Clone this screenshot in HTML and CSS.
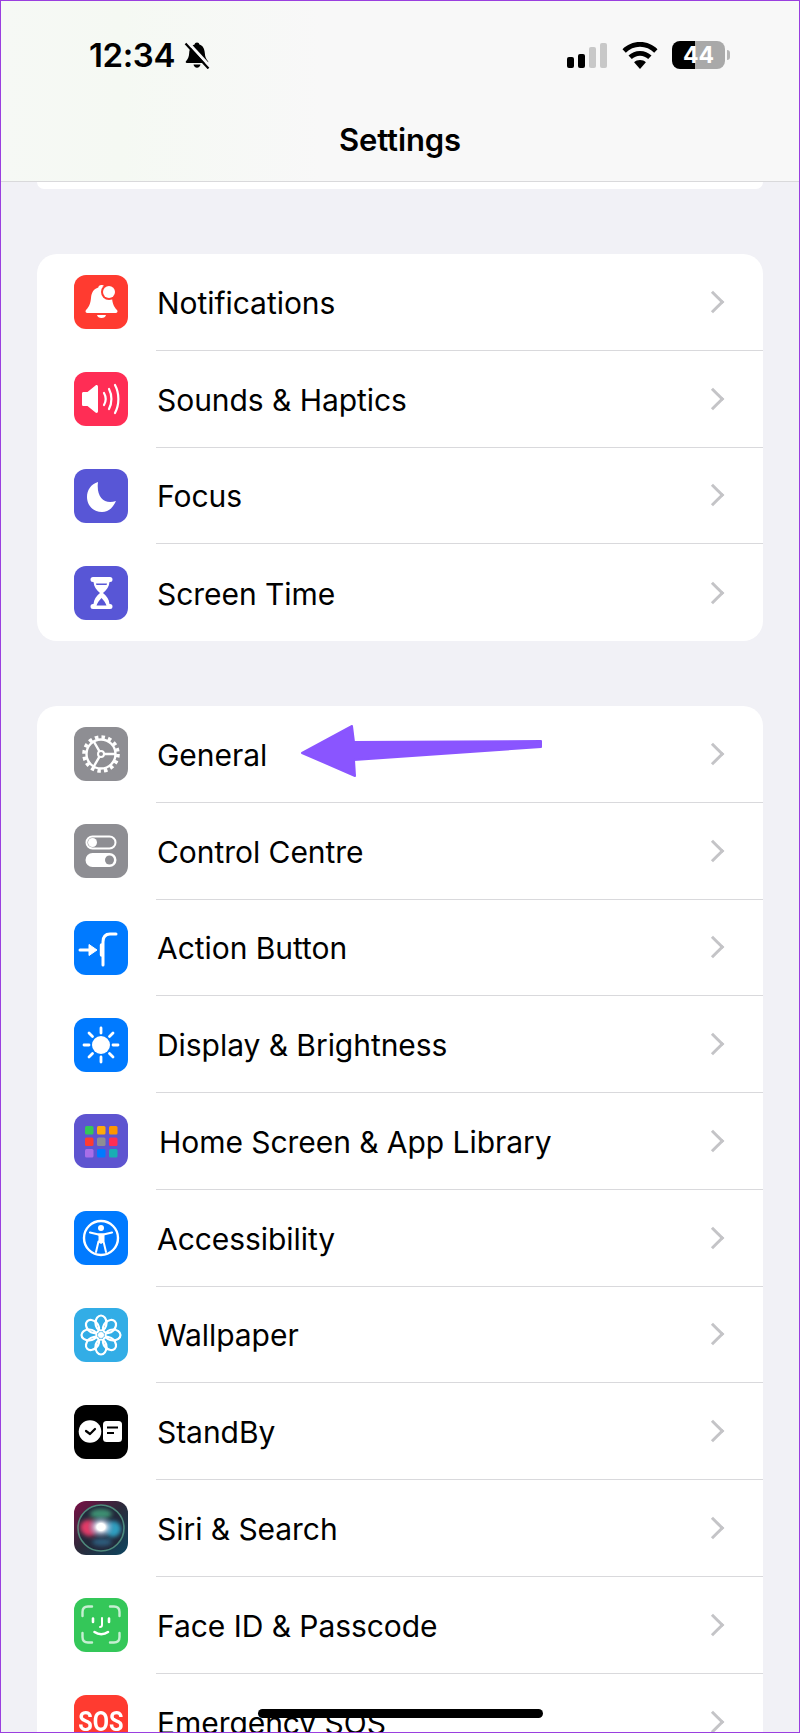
FILE: index.html
```html
<!DOCTYPE html>
<html>
<head>
    <meta charset="utf-8">
    <title>Settings</title>
    <link rel="stylesheet" href="styles.css">
</head>

<body>
    <div class="top">
        <div class="status">
            <div class="time">12:34</div>
            <svg class="bell" viewBox="0 0 28 28">
                <path d="M14 1.500c-1.400 0-2.200.9-2.400 2C8 4.600 6.500 8 6.200 12c-.3 4-1.200 6-3.200 8.300-.6.8-.2 1.700.9 1.700h20.200c1.100 0 1.500-.9.9-1.700-2-2.300-2.900-4.300-3.200-8.300-.3-4-1.800-7.400-5.400-8.500-.2-1.100-1-2-2.400-2z"/>
                <path d="M10.500 23.500h7c-.3 2-1.700 3.200-3.500 3.200s-3.200-1.200-3.500-3.200z"/>
                <path d="M4.500 1l23 25" stroke="#f8f8f8" stroke-width="3"/>
                <path d="M2.500 2.500l23 25" stroke="#000" stroke-width="2.200"/>
            </svg>
            <div class="status-r">
                <div class="signal"><i></i><i></i><i class="off"></i><i class="off"></i></div>
                <svg class="wifi" viewBox="0 0 36 27">
                    <path d="M18 0C11 0 5 2.700.5 7.200l3.300 3.500C7.500 7 12.500 4.800 18 4.800s10.500 2.200 14.200 5.900l3.300-3.500C31 2.700 25 0 18 0z"/>
                    <path d="M18 9c-4.500 0-8.500 1.800-11.500 4.600l3.300 3.500c2.100-2 5-3.300 8.200-3.300s6.100 1.300 8.200 3.300l3.300-3.500C26.500 10.800 22.500 9 18 9z"/>
                    <path d="M18 18c-2.300 0-4.400.9-5.900 2.300L18 27l5.900-6.700C22.400 18.900 20.300 18 18 18z"/>
                </svg>
                <div class="batt">44</div>
                <div class="batt-cap"></div>
            </div>
        </div>
        <div class="nav-title">Settings</div>
    </div>
    <div class="stub"></div>

    <div class="group">
        <div class="row">
            <svg class="ic" viewBox="0 0 54 54">
                <rect width="54" height="54" rx="12" fill="#ff3b30"/>
                <path d="M27.500 10c-2 0-3 1-3.200 2.600C19.500 14 17.500 18 17 23c-.5 5-1.500 8.500-5 12-1 1-.5 3 1.500 3h28c2 0 2.500-2 1.500-3-3.500-3.500-4.500-7-5-12-.5-5-2.500-9-7.300-10.400-.2-1.600-1.200-2.600-2.700-2.600z" fill="#fff"/>
                <path d="M23 40h9c-.5 2-2 3-4.500 3s-4-1-4.500-3z" fill="#fff"/>
                <circle cx="35" cy="17" r="8" fill="#ff3b30"/>
                <circle cx="35" cy="17" r="6" fill="#fff"/>
            </svg>
            <div class="label">Notifications<span class="chev"></span></div>
        </div>
        <div class="row">
            <svg class="ic" viewBox="0 0 54 54">
                <rect width="54" height="54" rx="12" fill="#ff2d55"/>
                <path d="M8 21.500c0-1 .7-1.500 1.500-1.500h4l8-6.500c1-.8 2.500-.3 2.500 1.200v24.600c0 1.500-1.500 2-2.500 1.200l-8-6.500h-4c-.8 0-1.500-.5-1.500-1.500z" fill="#fff"/>
                <g fill="none" stroke="#fff" stroke-width="2.200" stroke-linecap="round">
                    <path d="M30 21c2 3.500 2 8.500 0 12"/>
                    <path d="M35 17c3.200 6 3.200 14 0 20"/>
                    <path d="M41 13c4.500 8.500 4.500 19.500 0 28"/>
                </g>
            </svg>
            <div class="label">Sounds &amp; Haptics<span class="chev"></span></div>
        </div>
        <div class="row">
            <svg class="ic" viewBox="0 0 54 54">
                <rect width="54" height="54" rx="12" fill="#5856d6"/>
                <path d="M24 13C17 15 13 21 13 28c0 8.500 6.500 15 15 15 6 0 11-4 14-11-11 4-20-3-18-19z" fill="#fff"/>
            </svg>
            <div class="label">Focus<span class="chev"></span></div>
        </div>
        <div class="row">
            <svg class="ic" viewBox="0 0 54 54">
                <rect width="54" height="54" rx="12" fill="#5856d6"/>
                <path d="M19 11h17a2.500 2.500 0 0 1 0 5h-.5c-.5 5-3 8-6.500 11 3.500 3 6 6 6.500 11h.5a2.500 2.500 0 0 1 0 5H19a2.500 2.500 0 0 1 0-5h.5c.5-5 3-8 6.500-11-3.500-3-6-6-6.500-11H19a2.500 2.500 0 0 1 0-5z" fill="#fff"/>
                <path d="M22 17.500h11l-.4 1.500H22.400zM22.500 39.500c.8-2.500 2.500-5 5-7.500 2.500 2.500 4.200 5 5 7.500z" fill="#5856d6"/>
            </svg>
            <div class="label">Screen Time<span class="chev"></span></div>
        </div>
    </div>

    <div class="group">
        <div class="row">
            <svg class="ic" viewBox="0 0 54 54">
                <rect width="54" height="54" rx="12" fill="#8e8e93"/>
                <circle cx="27" cy="27" r="14.500" fill="none" stroke="#fff" stroke-width="2.400"/>
                <circle cx="27" cy="27" r="17" fill="none" stroke="#fff" stroke-width="3.600" stroke-dasharray="3.500 3.175"/>
                <circle cx="27" cy="27" r="3" fill="none" stroke="#fff" stroke-width="2"/>
                <path d="M30 27h12M25.500 24.400L19.500 14M25.500 29.600L19.500 40" stroke="#fff" stroke-width="2.400"/>
            </svg>
            <div class="label">General<span class="chev"></span></div>
        </div>
        <div class="row">
            <svg class="ic" viewBox="0 0 54 54">
                <rect width="54" height="54" rx="12" fill="#8e8e93"/>
                <rect x="12.500" y="12.500" width="29" height="12" rx="6" fill="none" stroke="#fff" stroke-width="2"/>
                <circle cx="18.500" cy="18.500" r="4.500" fill="#fff"/>
                <rect x="11.500" y="29" width="31" height="14" rx="7" fill="#fff"/>
                <circle cx="35.500" cy="36" r="4.500" fill="#8e8e93"/>
            </svg>
            <div class="label">Control Centre<span class="chev"></span></div>
        </div>
        <div class="row">
            <svg class="ic" viewBox="0 0 54 54">
                <rect width="54" height="54" rx="12" fill="#007aff"/>
                <path d="M6 29h10" stroke="#fff" stroke-width="3" stroke-linecap="round"/>
                <path d="M15 23.500l8 5.500-8 5.500z" fill="#fff" stroke="#fff" stroke-linejoin="round"/>
                <path d="M29 44V21c0-5 2.500-8 7-8h6" fill="none" stroke="#fff" stroke-width="3" stroke-linecap="round"/>
                <path d="M27.500 24v10" stroke="#fff" stroke-width="3.400" stroke-linecap="round"/>
            </svg>
            <div class="label">Action Button<span class="chev"></span></div>
        </div>
        <div class="row">
            <svg class="ic" viewBox="0 0 54 54">
                <rect width="54" height="54" rx="12" fill="#007aff"/>
                <circle cx="27" cy="27" r="9" fill="#fff"/>
                <path d="M27 10v5M27 39v5M10 27h5M39 27h5M15 15l3.500 3.500M35.500 35.500L39 39M15 39l3.500-3.500M35.500 18.500L39 15" stroke="#fff" stroke-width="2.800" stroke-linecap="round"/>
            </svg>
            <div class="label">Display &amp; Brightness<span class="chev"></span></div>
        </div>
        <div class="row row-home">
            <svg class="ic" viewBox="0 0 54 54">
                <rect width="54" height="54" rx="12" fill="#5e54d0"/>
                <rect x="11" y="12" width="8.500" height="8.500" rx="1.500" fill="#34c759"/>
                <rect x="23" y="12" width="8.500" height="8.500" rx="1.500" fill="#ffa90a"/>
                <rect x="35" y="12" width="8.500" height="8.500" rx="1.500" fill="#ff9500"/>
                <rect x="11" y="23.500" width="8.500" height="8.500" rx="1.500" fill="#ff3b30"/>
                <rect x="23" y="23.500" width="8.500" height="8.500" rx="1.500" fill="#8e8e93"/>
                <rect x="35" y="23.500" width="8.500" height="8.500" rx="1.500" fill="#ff2d55"/>
                <rect x="11" y="35" width="8.500" height="8.500" rx="1.500" fill="#a86ee8"/>
                <rect x="23" y="35" width="8.500" height="8.500" rx="1.500" fill="#007aff"/>
                <rect x="35" y="35" width="8.500" height="8.500" rx="1.500" fill="#19aeb4"/>
            </svg>
            <div class="label">Home Screen &amp; App Library<span class="chev"></span></div>
        </div>
        <div class="row">
            <svg class="ic" viewBox="0 0 54 54">
                <rect width="54" height="54" rx="12" fill="#007aff"/>
                <circle cx="27" cy="27" r="17" fill="none" stroke="#fff" stroke-width="2.400"/>
                <circle cx="27" cy="17" r="3" fill="#fff"/>
                <path d="M16 21.500l8.500 2h5l8.500-2" fill="none" stroke="#fff" stroke-width="2.200" stroke-linecap="round" stroke-linejoin="round"/>
                <path d="M24.500 23.500h5v7l2.500 10.500M24.500 30.500L22 41" fill="none" stroke="#fff" stroke-width="2" stroke-linecap="round"/>
                <path d="M24.500 23.500h5v8L27 33l-2.500-1.500z" fill="#fff"/>
            </svg>
            <div class="label">Accessibility<span class="chev"></span></div>
        </div>
        <div class="row">
            <svg class="ic" viewBox="0 0 54 54">
                <rect width="54" height="54" rx="12" fill="#32ade6"/>
                <g fill="none" stroke="#fff" stroke-width="2.200">
                    <ellipse cx="27" cy="15" rx="5.500" ry="7.500"/>
                    <ellipse cx="27" cy="39" rx="5.500" ry="7.500"/>
                    <ellipse cx="15" cy="27" rx="7.500" ry="5.500"/>
                    <ellipse cx="39" cy="27" rx="7.500" ry="5.500"/>
                    <ellipse cx="27" cy="15" rx="5.500" ry="7.500" transform="rotate(45 27 27)"/>
                    <ellipse cx="27" cy="39" rx="5.500" ry="7.500" transform="rotate(45 27 27)"/>
                    <ellipse cx="15" cy="27" rx="7.500" ry="5.500" transform="rotate(45 27 27)"/>
                    <ellipse cx="39" cy="27" rx="7.500" ry="5.500" transform="rotate(45 27 27)"/>
                </g>
                <circle cx="27" cy="27" r="3" fill="#fff"/>
            </svg>
            <div class="label">Wallpaper<span class="chev"></span></div>
        </div>
        <div class="row">
            <svg class="ic" viewBox="0 0 54 54">
                <rect width="54" height="54" rx="12" fill="#000"/>
                <circle cx="16" cy="26.500" r="11.300" fill="#fff"/>
                <path d="M12 26l4 3 5-5" fill="none" stroke="#000" stroke-width="2.200" stroke-linecap="round" stroke-linejoin="round"/>
                <rect x="29" y="16" width="19" height="21" rx="3.500" fill="#fff"/>
                <path d="M33 22.500h11M33 28h7" stroke="#000" stroke-width="2"/>
            </svg>
            <div class="label">StandBy<span class="chev"></span></div>
        </div>
        <div class="row">
            <svg class="ic" viewBox="0 0 54 54">
                <defs>
                    <linearGradient id="sb" x1="0" y1="0" x2="1" y2="1">
                        <stop offset="0" stop-color="#7a0f45"/>
                        <stop offset=".5" stop-color="#2a2a3a"/>
                        <stop offset="1" stop-color="#0d4560"/>
                    </linearGradient>
                    <radialGradient id="sg">
                        <stop offset="0" stop-color="#fff"/>
                        <stop offset=".3" stop-color="#fff"/>
                        <stop offset=".6" stop-color="#b4c8e4" stop-opacity=".55"/>
                        <stop offset="1" stop-color="#6080a0" stop-opacity="0"/>
                    </radialGradient>
                    <filter id="sblur" x="-30%" y="-30%" width="160%" height="160%">
                        <feGaussianBlur stdDeviation="2"/>
                    </filter>
                </defs>
                <rect width="54" height="54" rx="12" fill="url(#sb)"/>
                <circle cx="27" cy="27" r="23" fill="#22283a" stroke="#4f8a7c" stroke-width="1.600"/>
                <g filter="url(#sblur)">
                    <ellipse cx="15" cy="27" rx="9" ry="8" fill="#e23a68" transform="rotate(25 15 27)"/>
                    <ellipse cx="39" cy="28" rx="8" ry="8" fill="#2f9fc0" transform="rotate(-25 39 28)"/>
                    <ellipse cx="27" cy="13" rx="11" ry="5" fill="#3c8f72"/>
                    <ellipse cx="28" cy="41" rx="10" ry="4" fill="#2f5c7c"/>
                </g>
                <ellipse cx="27" cy="26" rx="14" ry="12" fill="url(#sg)"/>
            </svg>
            <div class="label">Siri &amp; Search<span class="chev"></span></div>
        </div>
        <div class="row">
            <svg class="ic" viewBox="0 0 54 54">
                <rect width="54" height="54" rx="12" fill="#34c759"/>
                <g fill="none" stroke="#c6efd2" stroke-width="2.400" stroke-linecap="round">
                    <path d="M8.500 18v-4c0-3.500 2-5.500 5.500-5.500h4M36 8.500h4c3.500 0 5.500 2 5.500 5.500v4M8.500 35v4c0 3.500 2 5.500 5.500 5.500h4M36 44.500h4c3.500 0 5.500-2 5.500-5.500v-4"/>
                </g>
                <g fill="none" stroke="#fff" stroke-width="2.600" stroke-linecap="round">
                    <path d="M19 20.500v3.500M35 20.500v3.500"/>
                    <path d="M28 20v7c0 1-.5 2-2 2" stroke-width="2"/>
                    <path d="M20.500 34c4 2.800 9.500 2.800 13.500 0"/>
                </g>
            </svg>
            <div class="label">Face ID &amp; Passcode<span class="chev"></span></div>
        </div>
        <div class="row">
            <div class="ic ic-sos"><span>SOS</span></div>
            <div class="label">Emergency SOS<span class="chev"></span></div>
        </div>
    </div>

    <svg class="arrow" viewBox="0 0 800 1733">
        <path d="M302 753L352 726L354 742L541 741L541 747L354 760L355 776Z" fill="#8a55ff" stroke="#8a55ff" stroke-width="2" stroke-linejoin="round"/>
    </svg>
    <div class="home-bar"></div>
    <div class="frame"></div>
</body>

</html>
```

FILE: styles.css
```css
html {
    background: #f2f2f7;
}
body {
    position: relative;
    margin: 0;
    width: 800px;
    height: 1733px;
    overflow: hidden;
    background: #f1f1f6;
    color: #000;
    font-family: Inter, "Liberation Sans", sans-serif;
}

.top {
    height: 181px;
    background: linear-gradient(90deg, #f6f9f5 0, #f5f9f3 15%, #f8f8f8 40%);
    border-bottom: 1px solid #d9d9db;
}

.status {
    display: flex;
    align-items: center;
    height: 54px;
    padding: 28px 70px 0 89px;
}
.time {
    font-size: 33px;
    font-weight: 600;
    letter-spacing: -.4px;
    line-height: 1;
}
.bell {
    width: 28px;
    height: 28px;
    margin-left: 8px;
}
.status-r {
    display: flex;
    align-items: center;
    margin-left: auto;
}
.signal {
    display: flex;
    align-items: flex-end;
    gap: 4px;
    height: 25px;
    margin-right: 15px;
}
.signal i {
    width: 7px;
    height: 11px;
    background: #000;
    border-radius: 2px;
}
.signal i:nth-child(2) { height: 14px; }
.signal i:nth-child(3) { height: 21px; }
.signal i:nth-child(4) { height: 25px; }
.signal i.off { background: #c8c8c8; }
.wifi {
    width: 36px;
    height: 27px;
    margin-right: 14px;
}
.batt {
    width: 53px;
    height: 28px;
    border-radius: 8px;
    background: linear-gradient(90deg, #000 0 43%, #a9a9a9 43%);
    color: #fff;
    font-size: 23px;
    font-weight: 700;
    line-height: 28px;
    text-align: center;
}
.batt-cap {
    width: 3px;
    height: 10px;
    margin-left: 2px;
    background: #b5b5b5;
    border-radius: 0 3px 3px 0;
}

.nav-title {
    margin-top: 39px;
    font-size: 31px;
    font-weight: 600;
    letter-spacing: -.1px;
    line-height: 38px;
    text-align: center;
}

.stub {
    height: 7px;
    margin: 0 37px;
    background: #fff;
    border-radius: 0 0 14px 14px;
}

.group {
    margin: 65px 37px 0;
    background: #fff;
    border-radius: 20px;
}

.row {
    display: flex;
    align-items: center;
    height: 96.75px;
    padding-left: 37px;
    box-sizing: border-box;
}
.ic {
    flex: 0 0 auto;
    width: 54px;
    height: 54px;
    margin-right: 28px;
}
.ic-sos {
    display: flex;
    align-items: center;
    justify-content: center;
    background: #ff3b30;
    border-radius: 12px;
    color: #fff;
    font-family: Roboto, sans-serif;
    font-size: 28px;
    font-weight: 700;
}
.ic-sos span { transform: scaleX(.84); }

.label {
    position: relative;
    flex: 1;
    align-self: stretch;
    display: flex;
    align-items: center;
    padding: 2px 0 0 1px;
    border-bottom: 1px solid #d9d9dc;
    font-size: 30px;
    letter-spacing: -.05px;
}
.row:last-child .label { border-bottom: none; }
.row-home .label { padding-left: 3px; }

.chev {
    position: absolute;
    right: 42px;
    top: 50%;
    width: 16px;
    height: 16px;
    margin-top: -8px;
    box-sizing: border-box;
    border-top: 3.5px solid #c4c4c7;
    border-right: 3.5px solid #c4c4c7;
    transform: rotate(45deg);
}

.arrow {
    position: absolute;
    left: 0;
    top: 0;
    width: 800px;
    height: 1733px;
}
.home-bar {
    position: absolute;
    left: 258px;
    top: 1709px;
    width: 285px;
    height: 9px;
    background: #000;
    border-radius: 5px;
}
.frame {
    position: absolute;
    inset: 0;
    border: 1px solid #9a3fdf;
    border-top-width: 1.5px;
}
```
